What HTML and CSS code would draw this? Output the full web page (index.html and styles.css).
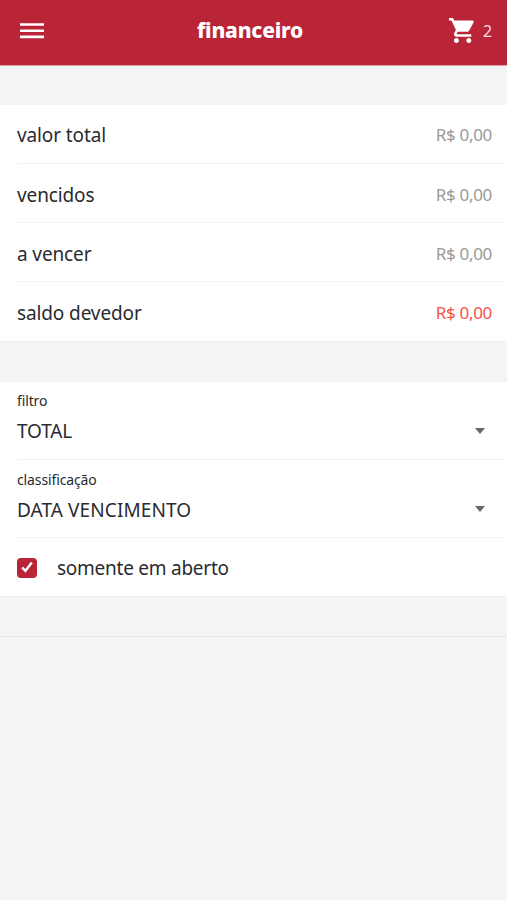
FILE: index.html
```html
<!DOCTYPE html>
<html lang="pt-BR">
<head>
<meta charset="utf-8">
<title>financeiro</title>
<link rel="stylesheet" href="styles.css">
</head>
<body>
<header class="toolbar">
  <svg class="menu" viewBox="0 0 24 18" width="24" height="18"><path d="M0 1.200h24v2.600H0zM0 7.400h24v2.600H0zM0 13.600h24v2.600H0z"/></svg>
  <h1 class="title">financeiro</h1>
  <div class="cart">
    <svg viewBox="1 2 21 20" width="26" height="25"><path d="M7 18c-1.100 0-2 .9-2 2s.9 2 2 2 2-.9 2-2-.9-2-2-2zM1 2v2h2l3.600 7.590-1.350 2.450C4.520 15.370 5.480 17 7 17h12v-2H7.420c-.14 0-.25-.11-.25-.25l.03-.12.9-1.630h7.450c.75 0 1.410-.41 1.750-1.030l3.580-6.490A1 1 0 0 0 20 4H5.210l-.94-2H1zm16 16c-1.100 0-2 .9-2 2s.9 2 2 2 2-.9 2-2-.9-2-2-2z"/></svg>
    <span class="count">2</span>
  </div>
</header>
<main>
  <section class="list">
    <div class="row"><span>valor total</span><span class="amount">R$ 0,00</span></div>
    <div class="row"><span>vencidos</span><span class="amount">R$ 0,00</span></div>
    <div class="row"><span>a vencer</span><span class="amount">R$ 0,00</span></div>
    <div class="row"><span>saldo devedor</span><span class="amount due">R$ 0,00</span></div>
  </section>
  <section class="list">
    <div class="field">
      <span class="label">filtro</span>
      <div class="select"><span>TOTAL</span><svg class="arrow" viewBox="0 0 10 6" width="10" height="6"><path d="M0 0h10L5 6z"/></svg></div>
    </div>
    <div class="field">
      <span class="label">classificação</span>
      <div class="select wide"><span>DATA VENCIMENTO</span><svg class="arrow" viewBox="0 0 10 6" width="10" height="6"><path d="M0 0h10L5 6z"/></svg></div>
    </div>
    <div class="row check">
      <svg class="box" viewBox="0 0 20 20" width="20" height="20"><rect width="20" height="20" rx="4"/><path d="M5.200 9.500l3.200 3.400 6.400-8.400"/></svg>
      <span>somente em aberto</span>
    </div>
  </section>
  <hr class="divider">
</main>
</body>
</html>
```
FILE: styles.css
```css
* { box-sizing: border-box; }
body {
  margin: 0;
  min-height: 900px;
  background: #f2f4f6;
  color: #292b30;
  font: 19px/26px "Noto Sans", sans-serif;
  letter-spacing: -0.12px;
}
.toolbar {
  display: grid;
  grid-template-columns: 1fr auto 1fr;
  align-items: center;
  height: 66px;
  padding: 0 15px 4px 20px;
  background: #b92536;
  border-bottom: 1px solid #dda0a8;
  color: #fff;
}
.menu, .cart svg { fill: #fff; }
.title {
  margin: 0 8px 2px -4px;
  font-size: 21px;
  font-weight: 800;
  letter-spacing: -0.2px;
}
.cart {
  display: flex;
  align-items: center;
  justify-content: flex-end;
  gap: 8px;
}
.count { font-size: 16px; color: #fbdfe2; }
.list {
  margin-top: 39px;
  background: #fff;
  border-bottom: 1px solid #edeef0;
}
.list + .list { margin-top: 40px; }
.row {
  display: flex;
  align-items: center;
  justify-content: space-between;
  height: 59px;
  margin-left: 17px;
  padding: 3px 15px 0 0;
}
.row:first-child { height: 58px; padding-top: 2px; }
.row:nth-child(4) { height: 60px; padding-top: 2px; }
.row + .row, .field + .field, .field + .row { border-top: 1px solid #f3f3f4; }
.amount { font-size: 17px; color: #999; letter-spacing: -0.3px; }
.due { color: #f4524d; }
.field {
  height: 78px;
  margin-left: 17px;
  padding-top: 8px;
}
.field:first-child { height: 77px; }
.field + .field { padding-top: 9px; }
.label { display: block; font-size: 14px; line-height: 22px; }
.select {
  display: flex;
  align-items: center;
  justify-content: space-between;
  height: 38px;
  padding-right: 22px;
}
.wide { letter-spacing: 0.1px; }
.arrow { fill: #666; }
.wide .arrow { margin-bottom: 2px; }
.check { justify-content: flex-start; gap: 20px; padding-top: 1px; letter-spacing: -0.25px; }
.box rect { fill: #b92536; }
.box path { fill: none; stroke: #fff; stroke-width: 2.4; }
.divider { margin: 39px 0 0; border: 0; border-top: 1px solid #e4e5e7; }
```
